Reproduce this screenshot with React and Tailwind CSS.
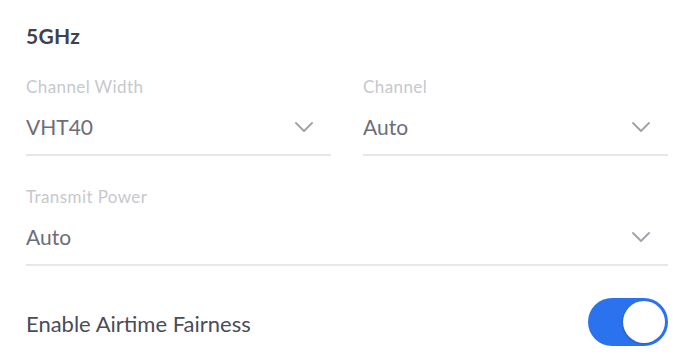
import React from 'react';

function Chevron() {
    return (
        <svg width="18" height="10" viewBox="0 0 18 10" fill="none" className="shrink-0">
            <path d="M1 1l8 8 8-8" stroke="#9fa1a9" strokeWidth="1.8" strokeLinecap="round" strokeLinejoin="round" />
        </svg>
    );
}

function SelectField({ label, value }) {
    return (
        <div className="flex flex-col">
            <span className="text-[17px] leading-[20px] tracking-[0.4px] text-[#c6c8ce]">{label}</span>
            <div className="mt-[16px] flex items-center justify-between border-b-2 border-[#e6e6eb] pb-[13px] pr-[18px]">
                <span className="text-[21px] leading-[28px] text-[#6b6d79]">{value}</span>
                <Chevron />
            </div>
        </div>
    );
}

export default function App() {
    return (
        <div className="w-[692px] h-[362px] bg-white pl-[26px] pr-[24px] pt-[24px] font-['Lato','Liberation_Sans',sans-serif]">
            <h2 className="text-[21px] leading-[24px] font-bold tracking-[0.3px] text-[#3f424e]">5GHz</h2>

            <div className="mt-[29px] grid grid-cols-2 gap-[32px]">
                <SelectField label="Channel Width" value="VHT40" />
                <SelectField label="Channel" value="Auto" />
            </div>

            <div className="mt-[31px]">
                <SelectField label="Transmit Power" value="Auto" />
            </div>

            <div className="mt-[32px] flex items-center justify-between">
                <span className="pt-[4px] text-[22px] leading-[28px] text-[#4a4c58]">Enable Airtime Fairness</span>
                <button className="flex h-[48px] w-[80px] items-center justify-end rounded-full bg-[#2b72ee] p-[3px]">
                    <span className="h-[42px] w-[42px] rounded-full bg-white shadow-[-1px_1px_2px_rgba(0,0,0,0.15)]" />
                </button>
            </div>
        </div>
    );
}
